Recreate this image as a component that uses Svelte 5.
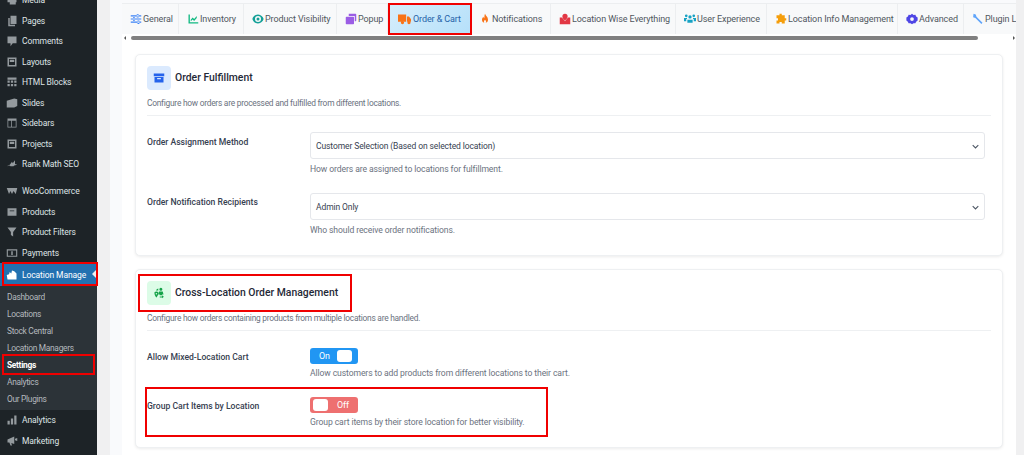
<script>
	const menuTop = [
		{ name: 'Media', icon: 'media' },
		{ name: 'Pages', icon: 'pages' },
		{ name: 'Comments', icon: 'comments' },
		{ name: 'Layouts', icon: 'layouts' },
		{ name: 'HTML Blocks', icon: 'blocks' },
		{ name: 'Slides', icon: 'slides' },
		{ name: 'Sidebars', icon: 'sidebars' },
		{ name: 'Projects', icon: 'layouts' },
		{ name: 'Rank Math SEO', icon: 'rank' },
	];
	const menuWoo = [
		{ name: 'WooCommerce', icon: 'woo' },
		{ name: 'Products', icon: 'products' },
		{ name: 'Product Filters', icon: 'filter' },
		{ name: 'Payments', icon: 'payments' },
	];
	const submenu = ['Dashboard', 'Locations', 'Stock Central', 'Location Managers', 'Settings', 'Analytics', 'Our Plugins'];
	const menuBottom = [
		{ name: 'Analytics', icon: 'analytics' },
		{ name: 'Marketing', icon: 'marketing' },
	];
	const sidebarIcons = {
		media: 'M2 3h12v8H2z M5 11v3h8v-3z',
		pages: 'M6 1h8v11H6z M3 4h2v9h7v2H3z',
		comments: 'M2 2h12v9H9l-3 4v-4H2z',
		layouts: 'M2 2h12v12H2z M4 4v8h8V4z M5 5h6v3H5z',
		blocks: 'M2 2h12v3H2z M2 6h3v3H2z M6.5 6h3v3h-3z M11 6h3v3h-3z M2 10.5h3v3H2z M6.5 10.5h3v3h-3z M11 10.5h3v3h-3z',
		slides: 'M1 5l10-3 4 1v9l-4 2H1z',
		sidebars: 'M2 2h12v12H2z M3 5v8h4V5z M8 5v8h5V5z',
		rank: 'M1 11l4-2 3-4 1 2 3-4v5l3 1-4 1-1 1H6l-1-1z',
		woo: 'M1 4h14l-2 8-3-4-2 4-2-4-2 4z',
		products: 'M2 3h12v10H2z M5 6v1h6V6z',
		filter: 'M2 2h12L9.5 8v6l-3-2V8z',
		payments: 'M1 3h14v10H1z M2.5 4.5v7h11v-7z M7 5.5h2v5H7z',
		analytics: 'M2 9h3v5H2z M6.5 6h3v8h-3z M11 2h3v12h-3z',
		marketing: 'M2 6l9-4v10L7 10.5 8 14H6l-1.5-4H2z M12 5l3-1v4l-3-1z',
	};

	const tabs = [
		{ name: 'General', color: '#3b82f6', icon: 'sliders', width: 57 },
		{ name: 'Inventory', color: '#10b981', icon: 'chart', width: 65 },
		{ name: 'Product Visibility', color: '#14a098', icon: 'eye', width: 93 },
		{ name: 'Popup', color: '#9b5de5', icon: 'popup', width: 51 },
		{ name: 'Order & Cart', color: '#f97316', icon: 'truck', width: 83, active: true },
		{ name: 'Notifications', color: '#f97316', icon: 'fire', width: 80 },
		{ name: 'Location Wise Everything', color: '#e23744', icon: 'map', width: 125 },
		{ name: 'User Experience', color: '#17a2c4', icon: 'users', width: 91 },
		{ name: 'Location Info Management', color: '#f59e0b', icon: 'puzzle', width: 131 },
		{ name: 'Advanced', color: '#4f46e5', icon: 'gear', width: 66 },
		{ name: 'Plugin Licence', color: '#60a5fa', icon: 'wrench', width: 90 },
	];
	const tabIcons = {
		sliders: 'M1 3h14v1.6H1z M1 7.2h14v1.6H1z M1 11.4h14V13H1z M9 1.5h2.5V6H9z M4 5.8h2.5v4.5H4z M10 10h2.5v4.5H10z',
		chart: 'M2 2h1.8v10.2H15V14H2z M5 9l2.5-3 2 2L13 4v2.5l-3.5 4-2-2L5 11z',
		eye: 'M8 2c4 0 6.5 3 7.5 6-1 3-3.5 6-7.5 6S1.5 11 .5 8C1.5 5 4 2 8 2z M8 4a4 4 0 1 0 0 8 4 4 0 0 0 0-8z M8 6a2 2 0 1 1 0 4 2 2 0 0 1 0-4z',
		popup: 'M5 1h9a1 1 0 0 1 1 1v8a1 1 0 0 1-1 1h-1V4H5z M2 5h9a1 1 0 0 1 1 1v8a1 1 0 0 1-1 1H2a1 1 0 0 1-1-1V6a1 1 0 0 1 1-1z',
		truck: 'M0 3h10v9H7a2 2 0 0 0-3 0H0z M11 5.5h2.5L16 9v3h-1a2 2 0 0 0-3 0h-1z M5.5 11a2 2 0 1 1 0 4 2 2 0 0 1 0-4z M13.5 11a2 2 0 1 1 0 4 2 2 0 0 1 0-4z',
		fire: 'M8 1c1 3 4 4 4 8a4 4 0 0 1-8 0c0-2 1-3 2-4 0 1 .5 2 1 2 .5-2 0-4 1-6z M8 9c-1 1-1.5 1.5-1.5 2.5a1.5 1.5 0 0 0 3 0C9.5 10.5 9 10 8 9z',
		map: 'M8 1a3.5 3.5 0 0 1 3.5 3.5C11.5 7 8 10 8 10S4.5 7 4.5 4.5A3.5 3.5 0 0 1 8 1z M1 6h3l4 5 4-5h3v9H1z',
		users: 'M8 3a2.2 2.2 0 1 1 0 4.4A2.2 2.2 0 0 1 8 3z M3 2a1.8 1.8 0 1 1 0 3.6A1.8 1.8 0 0 1 3 2z M13 2a1.8 1.8 0 1 1 0 3.6A1.8 1.8 0 0 1 13 2z M4.5 9h7v4h-7z M0 6.5h4V8H3v3H0z M12 6.5h4V11h-3V8h-1z',
		puzzle: 'M6 1h3v2h4v4h2v3h-2v4H9v-2H6v2H2v-4h2V7H2V3h4z',
		gear: 'M8 1l2 1.5 2.5-.3 1 2.3L15.5 6v4l-2 1.5-1 2.3-2.5-.3L8 15l-2-1.5-2.5.3-1-2.3-2-1.5V6l2-1.5 1-2.3 2.5.3z M8 5.5a2.5 2.5 0 1 0 0 5 2.5 2.5 0 0 0 0-5z',
		wrench: 'M2 1l3 1 1 3 8 8-1.5 1.5-8-8-3-1z',
	};
</script>

{#snippet sideItem(item)}
	<div class="item">
		<svg class="side-icon" viewBox="0 0 16 16"><path fill-rule="evenodd" d={sidebarIcons[item.icon]} /></svg>
		<span>{item.name}</span>
	</div>
{/snippet}

<div class="page">
	<aside class="sidebar">
		{#each menuTop as item}
			{@render sideItem(item)}
		{/each}
		<div class="gap"></div>
		{#each menuWoo as item}
			{@render sideItem(item)}
		{/each}
		<div class="item current">
			<svg class="side-icon" viewBox="0 0 16 16"><path d="M1 8l3-1 1-3 2 2 1-4 3 1 1 1 2 2v8H2z" /></svg>
			<span>Location Manage</span>
			<i class="arrow"></i>
		</div>
		<div class="submenu">
			{#each submenu as name}
				<div class="subitem" class:strong={name === 'Settings'}>{name}</div>
			{/each}
		</div>
		{#each menuBottom as item}
			{@render sideItem(item)}
		{/each}
	</aside>

	<main class="main">
		<div class="content">
			<nav class="tabs">
				{#each tabs as tab}
					<div class="tab" class:active={tab.active} style="flex-basis: {tab.width}px">
						<svg class="tab-icon" viewBox="0 0 16 16" style="color: {tab.color}"><path fill-rule="evenodd" d={tabIcons[tab.icon]} /></svg>
						<span>{tab.name}</span>
					</div>
				{/each}
			</nav>
			<div class="scrollbar">
				<i class="scroll-left"></i>
				<div class="thumb"></div>
				<i class="scroll-right"></i>
			</div>

			<section class="card first">
				<header class="card-head">
					<div class="badge blue">
						<svg viewBox="0 0 16 16"><path fill-rule="evenodd" d="M1 2h14v3.5H1z M2 6.5h12V14H2z M5.5 8v1.5h5V8z" /></svg>
					</div>
					<h2>Order Fulfillment</h2>
				</header>
				<p class="desc">Configure how orders are processed and fulfilled from different locations.</p>
				<div class="row">
					<div class="label">Order Assignment Method</div>
					<div class="field">
						<div class="select">
							<span>Customer Selection (Based on selected location)</span>
							<svg viewBox="0 0 10 6"><path d="M1 1l4 4 4-4" /></svg>
						</div>
						<p class="hint">How orders are assigned to locations for fulfillment.</p>
					</div>
				</div>
				<div class="row">
					<div class="label">Order Notification Recipients</div>
					<div class="field">
						<div class="select">
							<span>Admin Only</span>
							<svg viewBox="0 0 10 6"><path d="M1 1l4 4 4-4" /></svg>
						</div>
						<p class="hint">Who should receive order notifications.</p>
					</div>
				</div>
			</section>

			<section class="card second">
				<header class="card-head">
					<div class="badge green">
						<svg viewBox="0 0 16 16"><path fill-rule="evenodd" d="M10.5 1a2 2 0 1 1 0 4 2 2 0 0 1 0-4z M8 6h5l1 4h-2v1H9v-1H7z M4.5 6A2.5 2.5 0 0 1 7 9c0 2-2.5 5-2.5 5S2 11 2 9a2.5 2.5 0 0 1 2.5-3z M4.5 8a1 1 0 1 0 0 2 1 1 0 0 0 0-2z M7 2v2.5H4L5 3z M9 12.5h3V11l2.5 2-2.5 2v-1H9z" /></svg>
					</div>
					<h2>Cross-Location Order Management</h2>
				</header>
				<p class="desc">Configure how orders containing products from multiple locations are handled.</p>
				<div class="row toggle-row">
					<div class="label">Allow Mixed-Location Cart</div>
					<div class="field">
						<div class="toggle on"><span>On</span><i></i></div>
						<p class="hint">Allow customers to add products from different locations to their cart.</p>
					</div>
				</div>
				<div class="row toggle-row">
					<div class="label">Group Cart Items by Location</div>
					<div class="field">
						<div class="toggle off"><i></i><span>Off</span></div>
						<p class="hint">Group cart items by their store location for better visibility.</p>
					</div>
				</div>
			</section>
		</div>
	</main>

	<div class="mark mark-tab"></div>
	<div class="mark mark-menu"></div>
	<div class="mark mark-settings"></div>
	<div class="mark mark-title"></div>
	<div class="mark mark-group"></div>
</div>

<style>
	:global(body) {
		margin: 0;
		background: #f0f0f1;
	}
	.page {
		position: relative;
		display: flex;
		width: 1024px;
		height: 455px;
		overflow: hidden;
		font-family: Roboto, 'Noto Sans', sans-serif;
		letter-spacing: -0.1px;
		background: #f0f0f1;
	}

	.sidebar {
		width: 97px;
		flex: none;
		height: 475px;
		margin-top: -10px;
		background: #1d2327;
		color: #dfe3e6;
		font-size: 8.5px;
	}
	.item {
		position: relative;
		display: flex;
		align-items: center;
		gap: 4px;
		height: 20.5px;
		padding-left: 6px;
		white-space: nowrap;
	}
	.gap {
		height: 6.5px;
	}
	.side-icon {
		width: 12px;
		height: 12px;
		flex: none;
		fill: #949a9e;
	}
	.current {
		height: 23px;
		background: #2271b1;
		color: #fff;
	}
	.current .side-icon {
		fill: #fff;
	}
	.arrow {
		position: absolute;
		right: 1px;
		top: 7px;
		border: 4.5px solid transparent;
		border-right-color: #f0f0f1;
		border-left-width: 0;
	}
	.submenu {
		background: #2c3338;
		padding: 2px 0 3px;
	}
	.subitem {
		display: flex;
		align-items: center;
		height: 17px;
		padding-left: 7px;
		font-size: 8.4px;
		letter-spacing: -0.3px;
		color: #b4b9be;
	}
	.strong {
		color: #fff;
		font-weight: 700;
	}

	.main {
		flex: none;
		box-sizing: border-box;
		width: 906px;
		height: 455px;
		margin-left: 13px;
		padding-left: 12px;
		background: #f9fafc;
	}
	.content {
		height: 455px;
		padding-top: 3px;
		background: linear-gradient(#f9fafc 3px, #fff 3px);
	}

	.tabs {
		display: flex;
		height: 31px;
		overflow: hidden;
		background: #f8f9fa;
		box-shadow: inset 0 1px 0 #eceef0;
	}
	.tab {
		flex: none;
		box-sizing: border-box;
		display: flex;
		align-items: center;
		gap: 1px;
		padding-left: 8px;
		font-size: 9px;
		color: #50575e;
		white-space: nowrap;
		border-right: 1px solid #eceef0;
	}
	.tab-icon {
		width: 12px;
		height: 12px;
		flex: none;
		fill: currentColor;
	}
	.active {
		padding-left: 10px;
		gap: 2px;
		background: linear-gradient(135deg, #d7eefb, #b5e0fa);
		color: #2563a8;
		border-right: none;
	}
	.active .tab-icon {
		width: 13px;
		height: 13px;
	}

	.scrollbar {
		position: relative;
		height: 7px;
		display: flex;
		align-items: center;
		padding: 0 38px 0 9px;
	}
	.thumb {
		flex: 1;
		height: 4px;
		border-radius: 2px;
		background: #808080;
	}
	.scroll-left,
	.scroll-right {
		position: absolute;
		top: 2px;
		border: 2px solid transparent;
	}
	.scroll-left {
		left: 2px;
		border-right-color: #555;
		border-left-width: 0;
	}
	.scroll-right {
		right: 1px;
		border-left-color: #555;
		border-right-width: 0;
	}

	.card {
		box-sizing: border-box;
		width: 868px;
		margin-left: 13px;
		padding: 11px;
		background: #fff;
		border: 1px solid #eef0f2;
		border-radius: 5px;
		box-shadow: 0 1px 3px rgba(0, 0, 0, 0.08);
	}
	.first {
		margin-top: 13px;
		height: 202px;
	}
	.second {
		margin-top: 13px;
		height: 179px;
	}
	.card-head {
		display: flex;
		align-items: center;
		gap: 4px;
	}
	.card-head h2 {
		margin: 0 0 2px;
		font-size: 10.4px;
		font-weight: 500;
		letter-spacing: 0;
		color: #1f2937;
	}
	.badge {
		width: 24px;
		height: 24px;
		border-radius: 4px;
		display: flex;
		align-items: center;
		justify-content: center;
	}
	.badge svg {
		width: 12px;
		height: 12px;
	}
	.blue {
		background: #dbeafe;
		fill: #2563eb;
	}
	.green {
		background: #dcfce7;
		fill: #16a34a;
	}
	.desc {
		margin: 7px 0 0;
		padding-bottom: 5px;
		font-size: 8.4px;
		letter-spacing: -0.25px;
		line-height: 13px;
		color: #6b7280;
		border-bottom: 1px solid #eef0f2;
	}
	.row {
		display: flex;
		margin-top: 16px;
	}
	.row + .row {
		margin-top: 17px;
	}
	.row + .row .label {
		line-height: 18px;
	}
	.label {
		width: 163px;
		flex: none;
		font-size: 8.6px;
		font-weight: 500;
		letter-spacing: 0;
		color: #374151;
		line-height: 20px;
	}
	.field {
		flex: 1;
	}
	.select {
		box-sizing: border-box;
		position: relative;
		display: flex;
		align-items: center;
		height: 27px;
		width: 675px;
		padding-left: 5px;
		font-size: 8.5px;
		color: #374151;
		border: 1px solid #e5e7eb;
		border-radius: 3px;
		background: #fff;
	}
	.select svg {
		position: absolute;
		right: 5px;
		top: 11px;
		width: 7px;
		height: 5px;
		fill: none;
		stroke: #4b5563;
		stroke-width: 1.5;
	}
	.hint {
		margin: 4px 0 0;
		font-size: 8.6px;
		line-height: 13px;
		color: #6b7280;
	}
	.toggle-row {
		margin-top: 17px;
	}
	.toggle-row .label {
		line-height: 18px;
	}
	.toggle-row .hint {
		margin-top: 3px;
	}
	.toggle {
		box-sizing: border-box;
		display: flex;
		align-items: center;
		justify-content: space-between;
		width: 48px;
		height: 16px;
		padding: 0 6px 0 9px;
		border-radius: 3px;
		font-size: 8.9px;
		color: #fff;
	}
	.toggle i {
		width: 15px;
		height: 12px;
		border-radius: 3px;
		background: #fff;
	}
	.on {
		background: #2196f3;
	}
	.off {
		padding: 0 9px 0 3px;
		background: #ee7070;
	}

	.mark {
		position: absolute;
		box-sizing: border-box;
		border: 2px solid #f00000;
	}
	.mark-tab {
		left: 388px;
		top: 3px;
		width: 84px;
		height: 32px;
	}
	.mark-menu {
		left: 2px;
		top: 262px;
		width: 96px;
		height: 24px;
	}
	.mark-settings {
		left: 2px;
		top: 354px;
		width: 93px;
		height: 21px;
	}
	.mark-title {
		left: 138px;
		top: 274px;
		width: 214px;
		height: 38px;
	}
	.mark-group {
		left: 145px;
		top: 387px;
		width: 403px;
		height: 50px;
	}
</style>
